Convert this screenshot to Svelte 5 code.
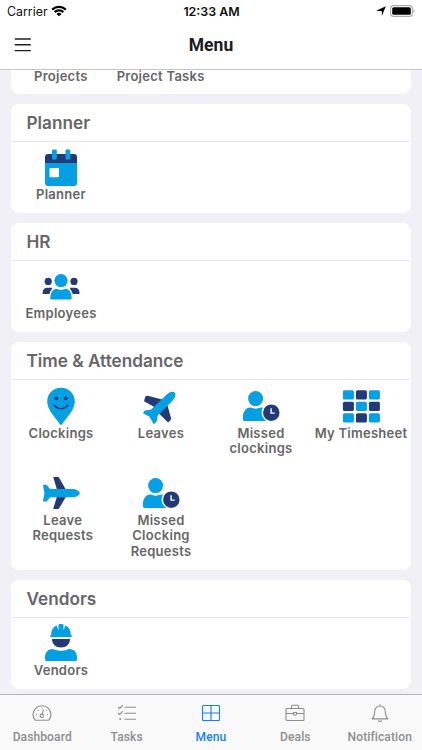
<script lang="ts">
	type Item = { icon: string; label: string };
	type Section = { title: string; items: Item[] };

	const sections: Section[] = [
		{ title: 'Planner', items: [{ icon: 'calendar', label: 'Planner' }] },
		{ title: 'HR', items: [{ icon: 'people', label: 'Employees' }] },
		{
			title: 'Time & Attendance',
			items: [
				{ icon: 'pin', label: 'Clockings' },
				{ icon: 'takeoff', label: 'Leaves' },
				{ icon: 'missed', label: 'Missed\nclockings' },
				{ icon: 'sheet', label: 'My Timesheet' },
				{ icon: 'plane', label: ' Leave\n Requests' },
				{ icon: 'missed', label: 'Missed\nClocking\nRequests' }
			]
		},
		{ title: 'Vendors', items: [{ icon: 'worker', label: 'Vendors' }] }
	];

	const tabs = ['Dashboard', 'Tasks', 'Menu', 'Deals', 'Notification'];
	let active = $state('Menu');
</script>

{#snippet itemIcon(name: string)}
	<svg class="item-icon" viewBox="0 0 38 37" aria-hidden="true">
		{#if name === 'calendar'}
			<path class="navy" d="M6 4h26a3 3 0 0 1 3 3v7H3V7a3 3 0 0 1 3-3z" />
			<path class="blue" d="M3 13h32v20a3 3 0 0 1-3 3H6a3 3 0 0 1-3-3z" />
			<rect class="blue" x="10" y="-.5" width="4.800" height="10" rx="1" />
			<rect class="blue" x="23.500" y="-.5" width="4.800" height="10" rx="1" />
			<rect class="white" x="7.500" y="18" width="9.500" height="9.200" rx="1" />
		{:else if name === 'people'}
			<g class="navy">
				<circle cx="6.200" cy="12.400" r="3.600" />
				<circle cx="32" cy="12.400" r="3.600" />
				<path d="M.7 25v-1.500c0-3.200 2-4.800 4.500-4.800H10V25zM37.500 25v-1.500c0-3.200-2-4.800-4.500-4.800h-5V25z" />
			</g>
			<path
				class="blue outlined"
				d="M7.500 29.300c0-6 2.800-10.300 6.700-10.300 1.500 0 2.500 1 4.800 1s3.300-1 4.800-1c3.900 0 6.700 4.300 6.700 10.300 0 1.300-.8 1.900-1.900 1.900H9.400c-1.100 0-1.900-.6-1.900-1.900z"
			/>
			<circle class="blue" cx="19" cy="11.600" r="6.600" />
		{:else if name === 'pin'}
			<path
				class="blue"
				d="M19-.2c7.800 0 13.800 6 13.800 13.700C32.800 22 24.800 29 20.300 36c-.7 1.100-1.900 1.100-2.600 0C13.200 29 5.200 22 5.200 13.500 5.200 5.800 11.200-.2 19-.2z"
			/>
			<circle class="navy" cx="14.300" cy="10.300" r="1.900" />
			<circle class="navy" cx="23.700" cy="10.300" r="1.900" />
			<path class="smile" d="M12.300 17.300c3.500 4.600 9.900 4.600 13.400 0" />
		{:else if name === 'takeoff'}
			<path
				class="navy"
				d="M3.300 8.800c.6-1 1.300-1.300 2.400-1.100L20 11.500l5.500 6L29 30c.2.900 0 1.500-.7 2.200l-2.200 2.300L16.500 25l-5-6.500L2 13.200z"
			/>
			<path
				class="blue"
				d="M25 6.300c3-2.700 6.200-3.100 7.600-1.700s1 4.600-1.700 7.600L15.700 27.500l-.9 5.300c-.1.600-.3.900-.7 1.300l-2.400 2.200-4.200-7.600L1 25.300l1-2c.3-.500.700-.8 1.300-.9l5.900-1z"
			/>
		{:else if name === 'plane'}
			<path
				class="navy"
				d="M11.200 2h4.300c.9 0 1.400.3 1.800 1.100L23.800 14.500v7.500l-6.500 11c-.4.8-.9 1.100-1.800 1.100h-4.300L14.800 22v-8z"
			/>
			<path
				class="blue"
				d="M.9 9.800h2.900c.6 0 1 .2 1.400.7l2.900 3.600H30.500c4 0 7.200 2.300 7.200 4.100s-3.200 4.100-7.200 4.100H8.100l-2.900 3.600c-.4.500-.8.700-1.400.7H.9l1.500-8.400z"
			/>
		{:else if name === 'missed'}
			<circle class="blue" cx="13.600" cy="10.600" r="7.500" />
			<path
				class="blue"
				d="M.8 30.500C.8 23.500 4 19.500 8 19.500c2 0 3.200 1.200 5.700 1.200s3.700-1.200 5.700-1.200c2.800 0 5.100 1.500 6.300 4.500V33H2.500c-1 0-1.700-.8-1.700-2.500z"
			/>
			<circle class="navy clock" cx="29.300" cy="24.700" r="9" />
			<path class="hand" d="M29.100 20.300v4.800h3.600" />
		{:else if name === 'sheet'}
			{#each [0, 1, 2, 3, 4, 5, 6, 7, 8] as cell}
				<rect
					class={cell % 2 ? 'navy' : 'blue'}
					x={0.9 + (cell % 3) * 13}
					y={2.2 + Math.floor(cell / 3) * 11.5}
					width="11"
					height="9.400"
					rx="1.600"
				/>
			{/each}
		{:else if name === 'worker'}
			<path
				class="blue"
				d="M9.200 10C9.200 5 11.500 2 14.800.6l1.700 4.800V-.1c.1-.7.8-.9 2.500-.9s2.400.2 2.500.9v5.500L23.200.6C26.500 2 28.800 5 28.800 10c.7.1 1.100.5 1.100 1s-.3.900-.9.900H9c-.6 0-.9-.4-.9-.9s.4-.9 1.100-1z"
			/>
			<path class="navy" d="M10 14h18c0 5.300-3.800 8.500-9 8.500S10 19.300 10 14z" />
			<path
				class="blue"
				d="M3 32.500c0-5 3-8.500 7.500-8.500 1.500 0 4 1.800 8.500 1.800s7-1.800 8.500-1.800c4.500 0 7.500 3.500 7.500 8.500V34c0 1.400-.7 2-1.700 2H4.700C3.700 36 3 35.400 3 34z"
			/>
		{/if}
	</svg>
{/snippet}

{#snippet tabIcon(name: string)}
	<svg class="tab-icon" viewBox="0 0 20 20" aria-hidden="true">
		{#if name === 'Dashboard'}
			<path d="M3.300 17.200C1.800 15.500 1 13.800 1 11.700a9 9 0 0 1 18 0c0 2.100-.8 3.800-2.300 5.500z" />
			<circle cx="9.800" cy="12.800" r="1.700" />
			<path d="M10.100 11.200 11.500 6.300M10 4.500v1M4 11.500h1M15 11.500h1M5.700 7.200l.7.700M14.400 7.600l.5-.5" />
		{:else if name === 'Tasks'}
			<path d="M7.500 4.200H19M7.500 10.200H19M7.500 16.200H19M1.200 4l1.500 1.500L5.800 2.200M1.200 10l1.500 1.500L5.800 8.200" />
			<circle class="dot" cx="3.200" cy="16" r="1" />
		{:else if name === 'Menu'}
			<rect x="1.500" y="2.500" width="17" height="15" rx="1" />
			<path d="M10 2.500v15M1.500 10h17" />
		{:else if name === 'Deals'}
			<rect x="1" y="5.500" width="18" height="12" rx="1" />
			<path d="M6.500 5.500V3.300c0-.7.300-1 1-1h5c.7 0 1 .3 1 1v2.200M1 10.500h7.500M11.500 10.500H19M8.500 9.500h3V11c0 1.700-3 1.700-3 0z" />
		{:else}
			<path
				d="M2.500 15.200c1.600-1.300 2.100-2.800 2.100-6.300 0-3.500 2.300-5.900 5.400-5.900s5.400 2.400 5.400 5.900c0 3.500.5 5 2.100 6.300.5.400.3.700-.2.700H2.700c-.5 0-.700-.3-.2-.7zM10 1.200V3M8.200 17.300c.4 1.600 3.200 1.600 3.600 0"
			/>
		{/if}
	</svg>
{/snippet}

<div class="screen">
	<div class="status">
		<div class="carrier">
			<span>Carrier</span>
			<svg class="wifi" viewBox="0 0 16 12" aria-hidden="true">
				<path d="M1.200 4.600a9.800 9.800 0 0 1 13.600 0M3.700 7.200a6.200 6.200 0 0 1 8.600 0" />
				<path class="wifi-dot" d="M8 11.300 5.500 8.900a3.700 3.700 0 0 1 5 0z" />
			</svg>
		</div>
		<span class="time">12:33 AM</span>
		<div class="power">
			<svg class="arrow" viewBox="0 0 10 10" aria-hidden="true">
				<path d="M9.800.2 5.900 9.900V5.200L.2 4.700z" />
			</svg>
			<svg class="battery" viewBox="0 0 26 12" aria-hidden="true">
				<rect class="case" x=".6" y=".6" width="21.800" height="10.800" rx="3" />
				<rect x="2.200" y="2.200" width="18.600" height="7.600" rx="1.600" />
				<path class="cap" d="M23.500 4v4c1.600-.6 1.600-3.400 0-4z" />
			</svg>
		</div>
	</div>

	<header>
		<button class="burger" aria-label="Open navigation">
			<svg viewBox="0 0 18 14" aria-hidden="true">
				<path d="M.8 1h16M.8 6.800h16M.8 12.600h16" />
			</svg>
		</button>
		<h1>Menu</h1>
	</header>

	<main>
		<section class="card cut">
			<span class="label">Projects</span>
			<span class="label">Project Tasks</span>
		</section>

		{#each sections as section}
			<section class="card">
				<h2>{section.title}</h2>
				<div class="items">
					{#each section.items as item}
						<div class="item">
							{@render itemIcon(item.icon)}
							<span class="label">{item.label}</span>
						</div>
					{/each}
				</div>
			</section>
		{/each}
	</main>

	<nav>
		{#each tabs as tab}
			<button class="tab" class:active={tab === active} onclick={() => (active = tab)}>
				{@render tabIcon(tab)}
				<span>{tab}</span>
			</button>
		{/each}
	</nav>
</div>

<style>
	:global(body) {
		margin: 0;
	}

	.screen {
		width: 422px;
		height: 750px;
		display: flex;
		flex-direction: column;
		overflow: hidden;
		background: #f0f0f6;
		font-family: Inter, 'Liberation Sans', sans-serif;
	}

	button {
		border: 0;
		padding: 0;
		background: none;
		font: inherit;
		color: inherit;
	}

	.status {
		height: 22px;
		flex: none;
		display: grid;
		grid-template-columns: 1fr auto 1fr;
		align-items: center;
		padding: 0 6px 0 7px;
		background: #fff;
		font-size: 12.4px;
		color: #111;
	}

	.carrier {
		display: flex;
		align-items: center;
		gap: 3px;
	}

	.wifi {
		width: 16px;
		height: 12px;
		fill: none;
		stroke: #000;
		stroke-width: 2.3;
	}

	.wifi-dot {
		fill: #000;
		stroke: none;
	}

	.time {
		font-weight: 600;
	}

	.power {
		display: flex;
		align-items: center;
		justify-content: flex-end;
		gap: 4px;
	}

	.arrow {
		width: 10px;
		height: 10px;
	}

	.battery {
		width: 26px;
		height: 12px;
	}

	.case {
		fill: none;
		stroke: #aaa;
		stroke-width: 1.1;
	}

	.cap {
		fill: #aaa;
	}

	header {
		height: 47px;
		flex: none;
		display: grid;
		grid-template-columns: 1fr auto 1fr;
		align-items: center;
		padding: 0 14px;
		background: #fff;
		border-bottom: 1px solid #c4c4c8;
	}

	.burger {
		width: 18px;
		height: 14px;
		margin-top: -1px;
	}

	.burger svg {
		display: block;
		width: 18px;
		height: 14px;
		stroke: #222;
		stroke-width: 1.4;
	}

	h1 {
		margin: -1px 0 0;
		font: 700 17.5px Roboto, sans-serif;
		color: #1c1c1e;
	}

	main {
		flex: 1;
		min-height: 0;
		overflow: hidden;
		padding: 0 11px;
	}

	.card {
		margin-bottom: 10px;
		background: #fff;
		border-radius: 8px;
		overflow: hidden;
	}

	h2 {
		height: 37px;
		margin: 0 1px;
		padding-left: 14.5px;
		border-bottom: 1px solid #e6e6ea;
		font-size: 17.2px;
		font-weight: 600;
		line-height: 38px;
		color: #666669;
	}

	.items {
		display: grid;
		grid-template-columns: repeat(4, 100px);
	}

	.item {
		display: flex;
		flex-direction: column;
		align-items: center;
		padding: 7.6px 0 10.2px;
	}

	.item-icon {
		width: 38px;
		height: 37px;
		margin-bottom: 0.7px;
		overflow: visible;
	}

	.label {
		font-size: 13px;
		font-weight: 600;
		line-height: 15.7px;
		letter-spacing: 0.27px;
		text-align: center;
		white-space: pre;
		color: #666;
	}

	.cut {
		height: 24px;
		display: flex;
		gap: 29px;
		padding-left: 23px;
		border-radius: 0 0 8px 8px;
		box-sizing: border-box;
	}

	.cut .label {
		line-height: 12px;
	}

	.blue {
		fill: #04a0e3;
	}

	.navy {
		fill: #243a76;
	}

	.white {
		fill: #fff;
	}

	.outlined,
	.clock {
		stroke: #fff;
		stroke-width: 1.5;
	}

	.smile {
		fill: none;
		stroke: #243a76;
		stroke-width: 1.6;
		stroke-linecap: round;
	}

	.hand {
		fill: none;
		stroke: #fff;
		stroke-width: 1.4;
	}

	nav {
		height: 55px;
		flex: none;
		display: grid;
		grid-template-columns: repeat(5, 1fr);
		border-top: 1px solid #b5b5ba;
		background: #f9f9f9;
	}

	.tab {
		display: flex;
		flex-direction: column;
		align-items: center;
		padding-top: 8px;
		gap: 6px;
		font: 500 12px/16px Roboto, sans-serif;
		letter-spacing: 0.12px;
		color: #8e8e90;
	}

	.active {
		color: #157efb;
	}

	.tab-icon {
		width: 20px;
		height: 20px;
		fill: none;
		stroke: currentColor;
		stroke-width: 1.1;
		stroke-linejoin: round;
	}

	.dot {
		fill: currentColor;
		stroke: none;
	}
</style>
